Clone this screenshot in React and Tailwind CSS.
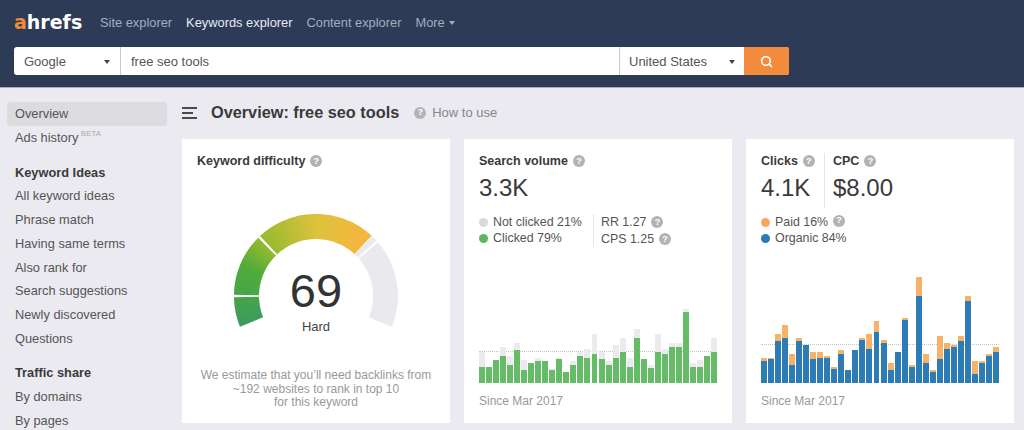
import { Search } from 'lucide-react'

const clicked = [
  [16, 31], [16, 16], [23, 23], [27, 36], [18, 27], [33, 40], [13, 23], [20, 20], [22, 25], [22, 22], [13, 14], [24, 25],
  [11, 11], [18, 22], [27, 31], [25, 34], [29, 49], [24, 31], [18, 22], [25, 38], [31, 45], [16, 25], [45, 54], [24, 24],
  [15, 18], [31, 49], [29, 34], [36, 40], [36, 40], [71, 74], [16, 20], [16, 23], [27, 27], [31, 45],
]
const paid = [
  [22, 25], [24, 25], [42, 49], [45, 58], [18, 29], [42, 45], [38, 38], [24, 31], [25, 31], [25, 27], [14, 16], [29, 33],
  [13, 13], [33, 33], [43, 45], [34, 49], [51, 62], [40, 43], [13, 20], [31, 31], [63, 65], [16, 18], [87, 106], [20, 29],
  [11, 13], [24, 47], [34, 40], [36, 38], [42, 47], [82, 87], [9, 22], [20, 22], [27, 29], [31, 36],
]
const ideas = ['All keyword ideas', 'Phrase match', 'Having same terms', 'Also rank for', 'Search suggestions', 'Newly discovered', 'Questions']

function Help({ className = '' }) {
  return (
    <span className={`inline-flex h-[12px] w-[12px] shrink-0 items-center justify-center rounded-full bg-[#b3b3b5] text-[9px] leading-none font-bold text-white ${className}`}>?</span>
  )
}

function Caret({ className = '' }) {
  return <span className={`h-0 w-0 border-x-[3.5px] border-t-[4px] border-x-transparent ${className}`} />
}

function Dot({ className }) {
  return <span className={`h-[9px] w-[9px] rounded-full ${className}`} />
}

const mix = (a, b, t) => a.map((v, i) => Math.round(v + (b[i] - v) * t))
const stops = [
  [-22, [61, 154, 96]], [0, [70, 165, 72]], [22, [80, 171, 58]], [46, [150, 186, 48]], [90, [220, 194, 60]], [132.5, [247, 181, 62]],
]
function colorAt(deg) {
  for (let i = 1; i < stops.length; i++) {
    if (deg <= stops[i][0]) {
      const t = (deg - stops[i - 1][0]) / (stops[i][0] - stops[i - 1][0])
      return `rgb(${mix(stops[i - 1][1], stops[i][1], t).join(',')})`
    }
  }
  return 'rgb(247,181,62)'
}

// angle 0 = pointing left, grows clockwise
function arc(from, to, R = 82, r = 57) {
  const pt = (rad, d) => {
    const a = (d * Math.PI) / 180
    return `${(90 - rad * Math.cos(a)).toFixed(2)} ${(90 - rad * Math.sin(a)).toFixed(2)}`
  }
  const large = to - from > 180 ? 1 : 0
  return `M${pt(R, from)}A${R} ${R} 0 ${large} 1 ${pt(R, to)}L${pt(r, to)}A${r} ${r} 0 ${large} 0 ${pt(r, from)}Z`
}

function Gauge() {
  const parts = []
  for (let d = -22; d < 132.5; d += 2) {
    parts.push(<path key={d} d={arc(d, Math.min(d + 2.6, 132.5))} fill={colorAt(d + 1)} />)
  }
  return (
    <svg width="180" height="125" viewBox="0 0 180 125" className="block">
      {parts}
      <path d={arc(133, 137.5)} fill="#e9e9ee" />
      <path d={arc(139, 202)} fill="#e9e9ee" />
      <path d={arc(-0.8, 0.8)} fill="#fff" />
      <path d={arc(45.2, 47)} fill="#fff" />
    </svg>
  )
}

function Bars({ data, line, low, high }) {
  return (
    <div className="relative flex h-[110px] items-end gap-[1.05px]">
      <div className="absolute inset-x-0 border-t border-dotted border-[#c4c4c4]" style={{ bottom: line }} />
      {data.map(([a, b], i) => (
        <div key={i} className="relative w-[6px]" style={{ height: b }}>
          <div className={`absolute inset-x-0 top-0 ${high}`} style={{ height: b - a }} />
          <div className={`absolute inset-x-0 bottom-0 ${low}`} style={{ height: a }} />
        </div>
      ))}
    </div>
  )
}

export default function App() {
  return (
    <div className="flex h-[430px] flex-col overflow-hidden bg-[#eaeaf0] font-['Liberation_Sans',Arial,sans-serif] text-[#555]">
      <header className="h-[88px] shrink-0 border-b border-[#a9adb8] bg-[#2d3b57] px-[14px]">
        <nav className="flex h-[47px] items-center pb-[2px] text-[12.85px]">
          <span className="mr-[18px] w-[68px] font-['DejaVu_Sans',sans-serif] text-[19px] leading-none font-bold text-white">
            <span className="text-[#f08c35]">a</span>hrefs
          </span>
          <span className="text-[#a3adbf]">Site explorer</span>
          <span className="ml-[14px] text-[#e8ebf1]">Keywords explorer</span>
          <span className="ml-[14px] text-[#a3adbf]">Content explorer</span>
          <span className="ml-[14px] text-[#a3adbf]">More</span>
          <Caret className="ml-[4px] border-t-[#a3adbf]" />
        </nav>
        <div className="flex h-[28px] w-[775px] overflow-hidden rounded-[3px] bg-white text-[13px] text-[#555]">
          <div className="flex w-[107px] items-center justify-between border-r border-[#c9c9cf] pt-[1px] pr-[10px] pl-[10px]">
            Google <Caret className="border-t-[#444]" />
          </div>
          <div className="flex flex-1 items-center border-r border-[#c9c9cf] pt-[1px] pl-[10px]">free seo tools</div>
          <div className="flex w-[124px] items-center justify-between pt-[1px] pr-[9px] pl-[9px]">
            United States <Caret className="border-t-[#444]" />
          </div>
          <div className="flex w-[45px] items-center justify-center bg-[#f28c3c]">
            <Search size={13} strokeWidth={3} className="text-white" />
          </div>
        </div>
      </header>

      <div className="flex min-h-0 flex-1">
        <aside className="w-[182px] shrink-0 pt-[14px] pl-[7px] text-[12.8px] leading-[23.7px]">
          <div className="flex h-[24px] w-[160px] items-center rounded-[3px] bg-[#dcdce0] pl-[8px]">Overview</div>
          <div className="pl-[8px]">
            Ads history <sup className="relative -top-[6px] -ml-[1px] align-baseline text-[8px] text-[#aaa]">BETA</sup>
          </div>
          <div className="mt-[11px] pl-[8px] font-bold text-[#3a3a3a]">Keyword Ideas</div>
          {ideas.map(t => (
            <div key={t} className="pl-[8px]">{t}</div>
          ))}
          <div className="mt-[11px] pl-[8px] font-bold text-[#3a3a3a]">Traffic share</div>
          <div className="pl-[8px]">By domains</div>
          <div className="pl-[8px]">By pages</div>
        </aside>

        <main className="min-w-0 flex-1">
          <div className="flex h-[51px] items-center pb-[2px]">
            <span className="flex w-[15px] flex-col gap-[3px]">
              <i className="h-[2px] w-[15px] bg-[#4a4a4a]" />
              <i className="h-[2px] w-[11px] bg-[#4a4a4a]" />
              <i className="h-[2px] w-[15px] bg-[#4a4a4a]" />
            </span>
            <h1 className="ml-[14px] text-[16.3px] font-bold text-[#3a3a3a]">Overview: free seo tools</h1>
            <Help className="ml-[15px]" />
            <span className="ml-[6px] text-[13px] text-[#888]">How to use</span>
          </div>

          <div className="flex gap-[14px]">
            <section className="flex h-[284px] w-[268px] flex-col bg-white px-[15px] pt-[14px]">
              <div className="flex items-center gap-[5px] text-[12.5px] leading-[16px] font-bold text-[#3a3a3a]">
                Keyword difficulty <Help />
              </div>
              <div className="relative mt-[37px] flex justify-center">
                <Gauge />
                <div className="absolute inset-x-0 top-[58px] text-center">
                  <div className="text-[47px] leading-[54px] text-[#333]">69</div>
                  <div className="text-[13px] leading-[18px] text-[#444]">Hard</div>
                </div>
              </div>
              <p className="mt-[38px] -mx-[15px] text-center text-[12px] leading-[13.5px] text-[#999]">
                We estimate that you’ll need backlinks from<br />~192 websites to rank in top 10<br />for this keyword
              </p>
            </section>

            <section className="flex h-[284px] w-[268px] flex-col bg-white px-[15px] pt-[14px]">
              <div className="flex items-center gap-[5px] text-[12.5px] leading-[16px] font-bold text-[#3a3a3a]">
                Search volume <Help />
              </div>
              <div className="mt-[5px] text-[24px] leading-[28px] text-[#3a3a3a]">3.3K</div>
              <div className="mt-[12px] flex text-[12.4px] leading-[16px]">
                <div className="w-[114px]">
                  <div className="flex items-center gap-[5px]"><Dot className="bg-[#d9d9d9]" /> Not clicked 21%</div>
                  <div className="flex items-center gap-[5px]"><Dot className="bg-[#5cb85c]" /> Clicked 79%</div>
                </div>
                <div className="border-l border-[#e6e6ea] pl-[7px]">
                  <div className="flex items-center gap-[5px]">RR 1.27 <Help /></div>
                  <div className="flex items-center gap-[5px] pt-[1px]">CPS 1.25 <Help /></div>
                </div>
              </div>
              <div className="mt-auto">
                <Bars data={clicked} line={31} low="bg-[#65bc66]" high="bg-[#eaeaef]" />
                <div className="mt-[10px] mb-[14px] text-[12px] leading-[16px] text-[#999]">Since Mar 2017</div>
              </div>
            </section>

            <section className="flex h-[284px] w-[268px] flex-col bg-white px-[15px] pt-[14px]">
              <div className="flex">
                <div className="w-[64px] border-r border-[#e6e6ea]">
                  <div className="flex items-center gap-[5px] text-[12.5px] leading-[16px] font-bold text-[#3a3a3a]">Clicks <Help /></div>
                  <div className="mt-[5px] mb-[6px] text-[24px] leading-[28px] text-[#3a3a3a]">4.1K</div>
                </div>
                <div className="pl-[8px]">
                  <div className="flex items-center gap-[5px] text-[12.5px] leading-[16px] font-bold text-[#3a3a3a]">CPC <Help /></div>
                  <div className="mt-[5px] text-[24px] leading-[28px] text-[#3a3a3a]">$8.00</div>
                </div>
              </div>
              <div className="mt-[6px] text-[12.4px] leading-[16px]">
                <div className="flex items-center gap-[5px]"><Dot className="bg-[#f6a95a]" /> Paid 16% <Help className="-mt-[3px]" /></div>
                <div className="flex items-center gap-[5px]"><Dot className="bg-[#2b7ab8]" /> Organic 84%</div>
              </div>
              <div className="mt-auto">
                <Bars data={paid} line={38} low="bg-[#2d7cb6]" high="bg-[#f7b26a]" />
                <div className="mt-[10px] mb-[14px] text-[12px] leading-[16px] text-[#999]">Since Mar 2017</div>
              </div>
            </section>
          </div>
        </main>
      </div>
    </div>
  )
}
